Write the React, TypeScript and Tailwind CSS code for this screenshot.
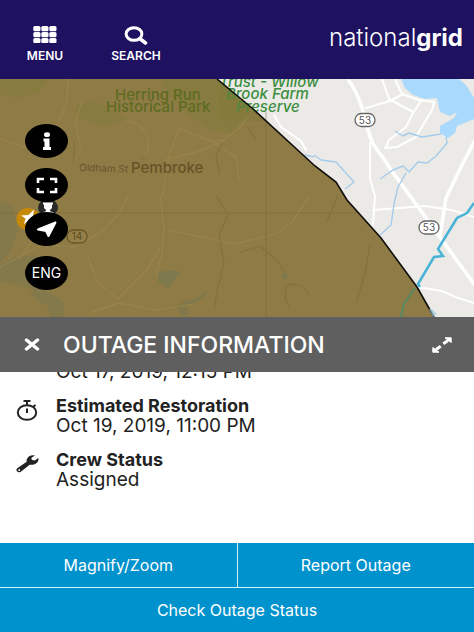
import type { ReactNode } from "react";

function MenuIcon() {
  return (
    <svg viewBox="0 0 24 17" className="h-[17px] w-6" fill="#fff" aria-hidden="true">
      {[0, 6, 12].map((y) =>
        [0, 8, 16].map((x) => <rect key={`${x}-${y}`} x={x + 0.3} y={y} width="7.2" height="5.2" rx="1.5" />)
      )}
    </svg>
  );
}

function SearchIcon() {
  return (
    <svg viewBox="0 0 24 19" className="h-[19px] w-6" fill="none" stroke="#fff" aria-hidden="true">
      <ellipse cx="10" cy="8" rx="7.9" ry="6.3" strokeWidth="3" />
      <path d="M16 12.8 21.5 17" strokeWidth="3.6" strokeLinecap="round" />
    </svg>
  );
}

function OutageMap() {
  return (
    <svg
      viewBox="0 79 474 238"
      preserveAspectRatio="xMidYMid slice"
      className="block h-full w-full font-['Inter',sans-serif]"
      role="img"
      aria-label="Outage area around Pembroke"
    >
      <rect y="79" width="474" height="238" fill="#ebeae7" />
      <path d="M401 79 405 88 413 95 425 99 437 98 440 112 450 116 457 112 454 118 440 126 440 133 448 138 455 133 457 126 474 119V98L466 85 459 79Z" fill="#a9d9fd" />
      <g fill="none" stroke="#fff" strokeLinecap="round" strokeLinejoin="round">
        <path d="M349 81C359 94 364 112 368 130S383 155 389 167L474 284" strokeWidth="3.6" />
        <path d="M474 142 462 165 446 198 440 236" strokeWidth="3.6" />
        <path d="M366 108 390 101 403 94M382 79 389 99 413 112M395 79 402 94 419 100 434 102 432 110 416 137 397 147 385 148M421 101 413 113 406 127 389 140 386 147M370 143 370 179 375 196 373 225M373 210 425 206 452 210 474 217M417 287 442 291 458 298 474 303M274 115 281 127 301 141 306 150" strokeWidth="2" />
      </g>
      <g fill="none" stroke="#a5cceb" strokeWidth="1.4" strokeLinejoin="round">
        <path d="M395 131 403 136 409 133 422 137 441 134M446 137 447 143 436 156 427 163 418 162 409 172 403 166 393 170 380 179M406 173 398 187 394 204 391 225 380 235M314 155 321 160 336 162 354 182 345 189M305 155 314 157" />
      </g>
      <path d="M0 79H217L252 108 315 166 336 182 347 200 381 238 417 287 434 317H0Z" fill="#8f7b45" />
      <g fill="#817b3d" opacity="0.5">
        <path d="M0 79H48L39 92 17 98 0 94ZM75 106 96 101 128 119 104 127 77 117Z" />
        <path d="M160 79H217L252 108 246 118 233 133 210 130 186 114 170 96Z" />
      </g>
      <g fill="#7a7950">
        <path d="M0 202 12 206 18 230 10 252 0 263ZM0 265 14 257 36 255 50 267 49 285 38 292 18 284 0 282ZM29 293 45 290 64 302 63 317H51L47 306Z" opacity=".55" />
        <path d="M178 304 188 308 190 315 181 315 177 308ZM180 303 195 299 206 291 207 294 194 304 184 306ZM282 273 288 274 287 281 282 278ZM139 156 146 157 144 160Z" opacity=".7" />
        <path d="M158 273 168 270 182 272 176 279 168 288 158 282Z" opacity=".75" />
      </g>
      <g fill="none" stroke="#a08b50" strokeWidth="1.5" opacity=".5" strokeLinejoin="round">
        <path d="M68 79 67 103 58 122M0 139 17 145 29 148M83 98 75 124 81 147 74 163M127 121C151 126 151 146 145 157M0 267 42 245 74 247 103 231 121 211 128 195M32 211 33 240 19 259M160 195 164 226 162 253 156 276M168 230 207 238 235 244 278 233 292 222 309 197M162 197 169 155 179 128 210 141 224 140 239 128 251 113M210 141 236 157 239 180M165 160 200 151 224 141M87 254 97 281 118 299 147 270 160 248M92 312 119 303 156 310 195 304" />
      </g>
      <g fill="none" stroke="#796838" strokeWidth="1.2" opacity=".5">
        <path d="M266 112V317M0 213H359" strokeWidth="1" />
        <path d="M216 195 228 215 219 234 224 263 218 287 214 310M239 253 260 246 277 260 285 273M289 306 285 298 286 287 291 284 303 286 309 295M222 142 216 157 220 174M247 126 256 140M338 195 327 221M370 244 365 274 356 303M74 142V162" />
      </g>
      <g fill="#5d6c21" fontSize="15" fontWeight="500">
        <text x="115" y="100">Herring Run</text>
        <text x="106" y="112">Historical Park</text>
      </g>
      <g fill="#3c8e40" fontSize="15" fontStyle="italic" fontWeight="500">
        <text x="219" y="87">Trust - Willow</text>
        <text x="226" y="99">Brook Farm</text>
        <text x="236" y="112">Preserve</text>
      </g>
      <path d="M217 79 252 108 266 121H220Z" fill="#7e7b37" opacity=".4" />
      <path d="M217 79 252 108 315 166 336 182 347 200 381 238 417 287 434 317" fill="none" stroke="#0f0e09" strokeWidth="1.6" />
      <path d="M474 203 467 213 457 218 438 249 443 256 434 257 418 284 420 287" fill="none" stroke="#48b3d7" strokeWidth="2.5" />
      <path d="M415 288 404 304 401 317" fill="none" stroke="#5a8860" strokeWidth="2.2" />
      <path d="M429 309 432 309 437 314 433 317Z" fill="#9dc9dc" opacity=".7" />
      <text x="131" y="173" fill="#655327" fontSize="15" fontWeight="500">Pembroke</text>
      <text x="79" y="171" fill="#65562f" fontSize="10" transform="rotate(2 79 171)">Oldham St</text>
      <g fontSize="10" textAnchor="middle" strokeWidth="1.3">
        <rect x="355" y="113.500" width="20" height="13" rx="6.500" fill="#fff" stroke="#666" />
        <text x="365" y="123.500" fill="#555">53</text>
        <rect x="419" y="221" width="20" height="13" rx="6.500" fill="#fff" stroke="#666" />
        <text x="429" y="231" fill="#555">53</text>
        <rect x="67" y="230" width="20" height="13" rx="6.500" fill="#948047" stroke="#685628" />
        <text x="77" y="240" fill="#5c4a20">14</text>
      </g>
      <ellipse cx="28" cy="219" rx="11.500" ry="11" fill="#c88908" />
      <path d="M34 209.500 33 216 38 221 30 220 24 224 25.500 218.500 21 215.500 28.500 215Z" fill="#fff" />
      <ellipse cx="48" cy="207.500" rx="10" ry="8.500" fill="#292928" />
      <path d="M43 202.500H53V204.500H52V208L50 210V211L54 213V215H42V213L46 211V210L44 208V204.500H43Z" fill="#fff" />
    </svg>
  );
}

function MapButton({ label, children }: { label: string; children: ReactNode }) {
  return (
    <button
      type="button"
      aria-label={label}
      className="flex h-[34px] w-[43px] items-center justify-center rounded-[50%] bg-black text-sm text-white"
    >
      {children}
    </button>
  );
}

function DetailRow({ icon, title, value }: { icon?: ReactNode; title: string; value: string }) {
  return (
    <div className="flex shrink-0">
      <div className="w-10 shrink-0 pt-1">{icon}</div>
      <dl className="text-[19px] leading-5">
        <dt className="text-[18px] font-bold">{title}</dt>
        <dd>{value}</dd>
      </dl>
    </div>
  );
}

function StopwatchIcon() {
  return (
    <svg viewBox="0 0 22 21" className="h-[21px] w-[22px]" fill="none" stroke="#222" strokeWidth="2" aria-hidden="true">
      <ellipse cx="11" cy="12.500" rx="9.200" ry="7.300" />
      <path d="M7.500 1H14.500M11 1V5M11 8.500V13M17 7 19.500 5" />
    </svg>
  );
}

function WrenchIcon() {
  return (
    <svg viewBox="0 0 24 20" className="h-5 w-6" aria-hidden="true">
      <path
        d="M18.800 1.400C15.500.600 11.800 2.200 10.800 5.300 10.500 6.200 10.500 7 10.700 7.800L1.200 14.200C-.600 15.600 1 18.800 3.700 18.300 4.300 18.200 4.700 18 5.100 17.600L13.700 10.700C17.900 11.500 22.500 9 22.500 5.200L22.200 4 18.800 6.600 15.900 6 15.300 4Z"
        fill="#222"
      />
      <circle cx="3.200" cy="16" r=".9" fill="#fff" />
    </svg>
  );
}

export default function App() {
  return (
    <main className="flex h-screen min-h-[600px] w-full flex-col overflow-hidden bg-white font-['Inter','Roboto',sans-serif] text-[#222]">
      <header className="flex h-[79px] shrink-0 items-start justify-between bg-[#1e1160] pr-[11px] pl-5 text-white">
        <nav className="flex gap-8 pt-[26px] text-[12px] leading-4 font-semibold">
          <button type="button" className="flex w-[50px] flex-col items-center">
            <span className="flex h-[22px] items-start"><MenuIcon /></span>
            MENU
          </button>
          <button type="button" className="flex w-[68px] flex-col items-center">
            <span className="flex h-[22px] items-start"><SearchIcon /></span>
            SEARCH
          </button>
        </nav>
        <a href="#home" className="pt-[22px] text-[24px] leading-8 font-light">
          national<span className="font-bold">grid</span>
        </a>
      </header>

      <section className="relative h-[238px] shrink-0">
        <OutageMap />
        <div className="absolute top-[45px] left-[25px] flex flex-col gap-[10px]">
          <MapButton label="Information">
            <svg viewBox="0 0 10 18" className="h-[18px] w-[10px]" fill="#fff" aria-hidden="true">
              <ellipse cx="5" cy="2.700" rx="3" ry="2.400" />
              <path d="M1.500 6.500H7.500V15H9V18H1V15H2.500V9.500H1.500Z" />
            </svg>
          </MapButton>
          <MapButton label="Full screen">
            <svg viewBox="0 0 22 17" className="h-[17px] w-[22px]" fill="none" stroke="#fff" strokeWidth="2.600" aria-hidden="true">
              <path d="M2 6V2H8M14 2H20V6M20 11V15H14M8 15H2V11" />
            </svg>
          </MapButton>
          <MapButton label="My location">
            <svg viewBox="0 0 22 17" className="h-[17px] w-[22px]" aria-hidden="true">
              <path d="M19.500 1.500 12.500 15 10 10 2 8.500Z" fill="#fff" stroke="#fff" strokeWidth="2" strokeLinejoin="round" />
            </svg>
          </MapButton>
          <MapButton label="Language: English">ENG</MapButton>
        </div>
      </section>

      <div className="flex h-[55px] shrink-0 items-center bg-[#5f5f5f] pr-[22px] pl-6 text-white">
        <button type="button" aria-label="Close" className="w-[39px]">
          <svg viewBox="0 0 16 13" className="h-[13px] w-4" fill="none" stroke="#fff" strokeWidth="3.400" strokeLinecap="round" aria-hidden="true">
            <path d="M2.500 2 13.500 11M13.500 2 2.500 11" />
          </svg>
        </button>
        <h1 className="flex-1 text-[23px] leading-8 font-medium">OUTAGE INFORMATION</h1>
        <button type="button" aria-label="Expand">
          <svg viewBox="0 0 20 16" className="h-4 w-5" aria-hidden="true">
            <path d="M11.300 6.800 16 3.500M8.700 9.200 4 12.500" stroke="#fff" strokeWidth="3" />
            <path d="M13 .800H19.200V5.500ZM.800 10.500V15.200H7Z" fill="#fff" stroke="#fff" strokeLinejoin="round" />
          </svg>
        </button>
      </div>

      <section className="flex min-h-0 flex-1 flex-col justify-end gap-[14px] overflow-hidden px-4 pb-[53px]">
        <DetailRow title="Reported" value="Oct 17, 2019, 12:15 PM" />
        <DetailRow icon={<StopwatchIcon />} title="Estimated Restoration" value="Oct 19, 2019, 11:00 PM" />
        <DetailRow icon={<WrenchIcon />} title="Crew Status" value="Assigned" />
      </section>

      <div className="grid shrink-0 grid-cols-2 gap-px bg-[#d5f1fa] text-base text-white">
        <button type="button" className="h-11 bg-[#0092cc]">Magnify/Zoom</button>
        <button type="button" className="h-11 bg-[#0092cc]">Report Outage</button>
        <button type="button" className="col-span-2 h-11 bg-[#0092cc]">Check Outage Status</button>
      </div>
    </main>
  );
}
